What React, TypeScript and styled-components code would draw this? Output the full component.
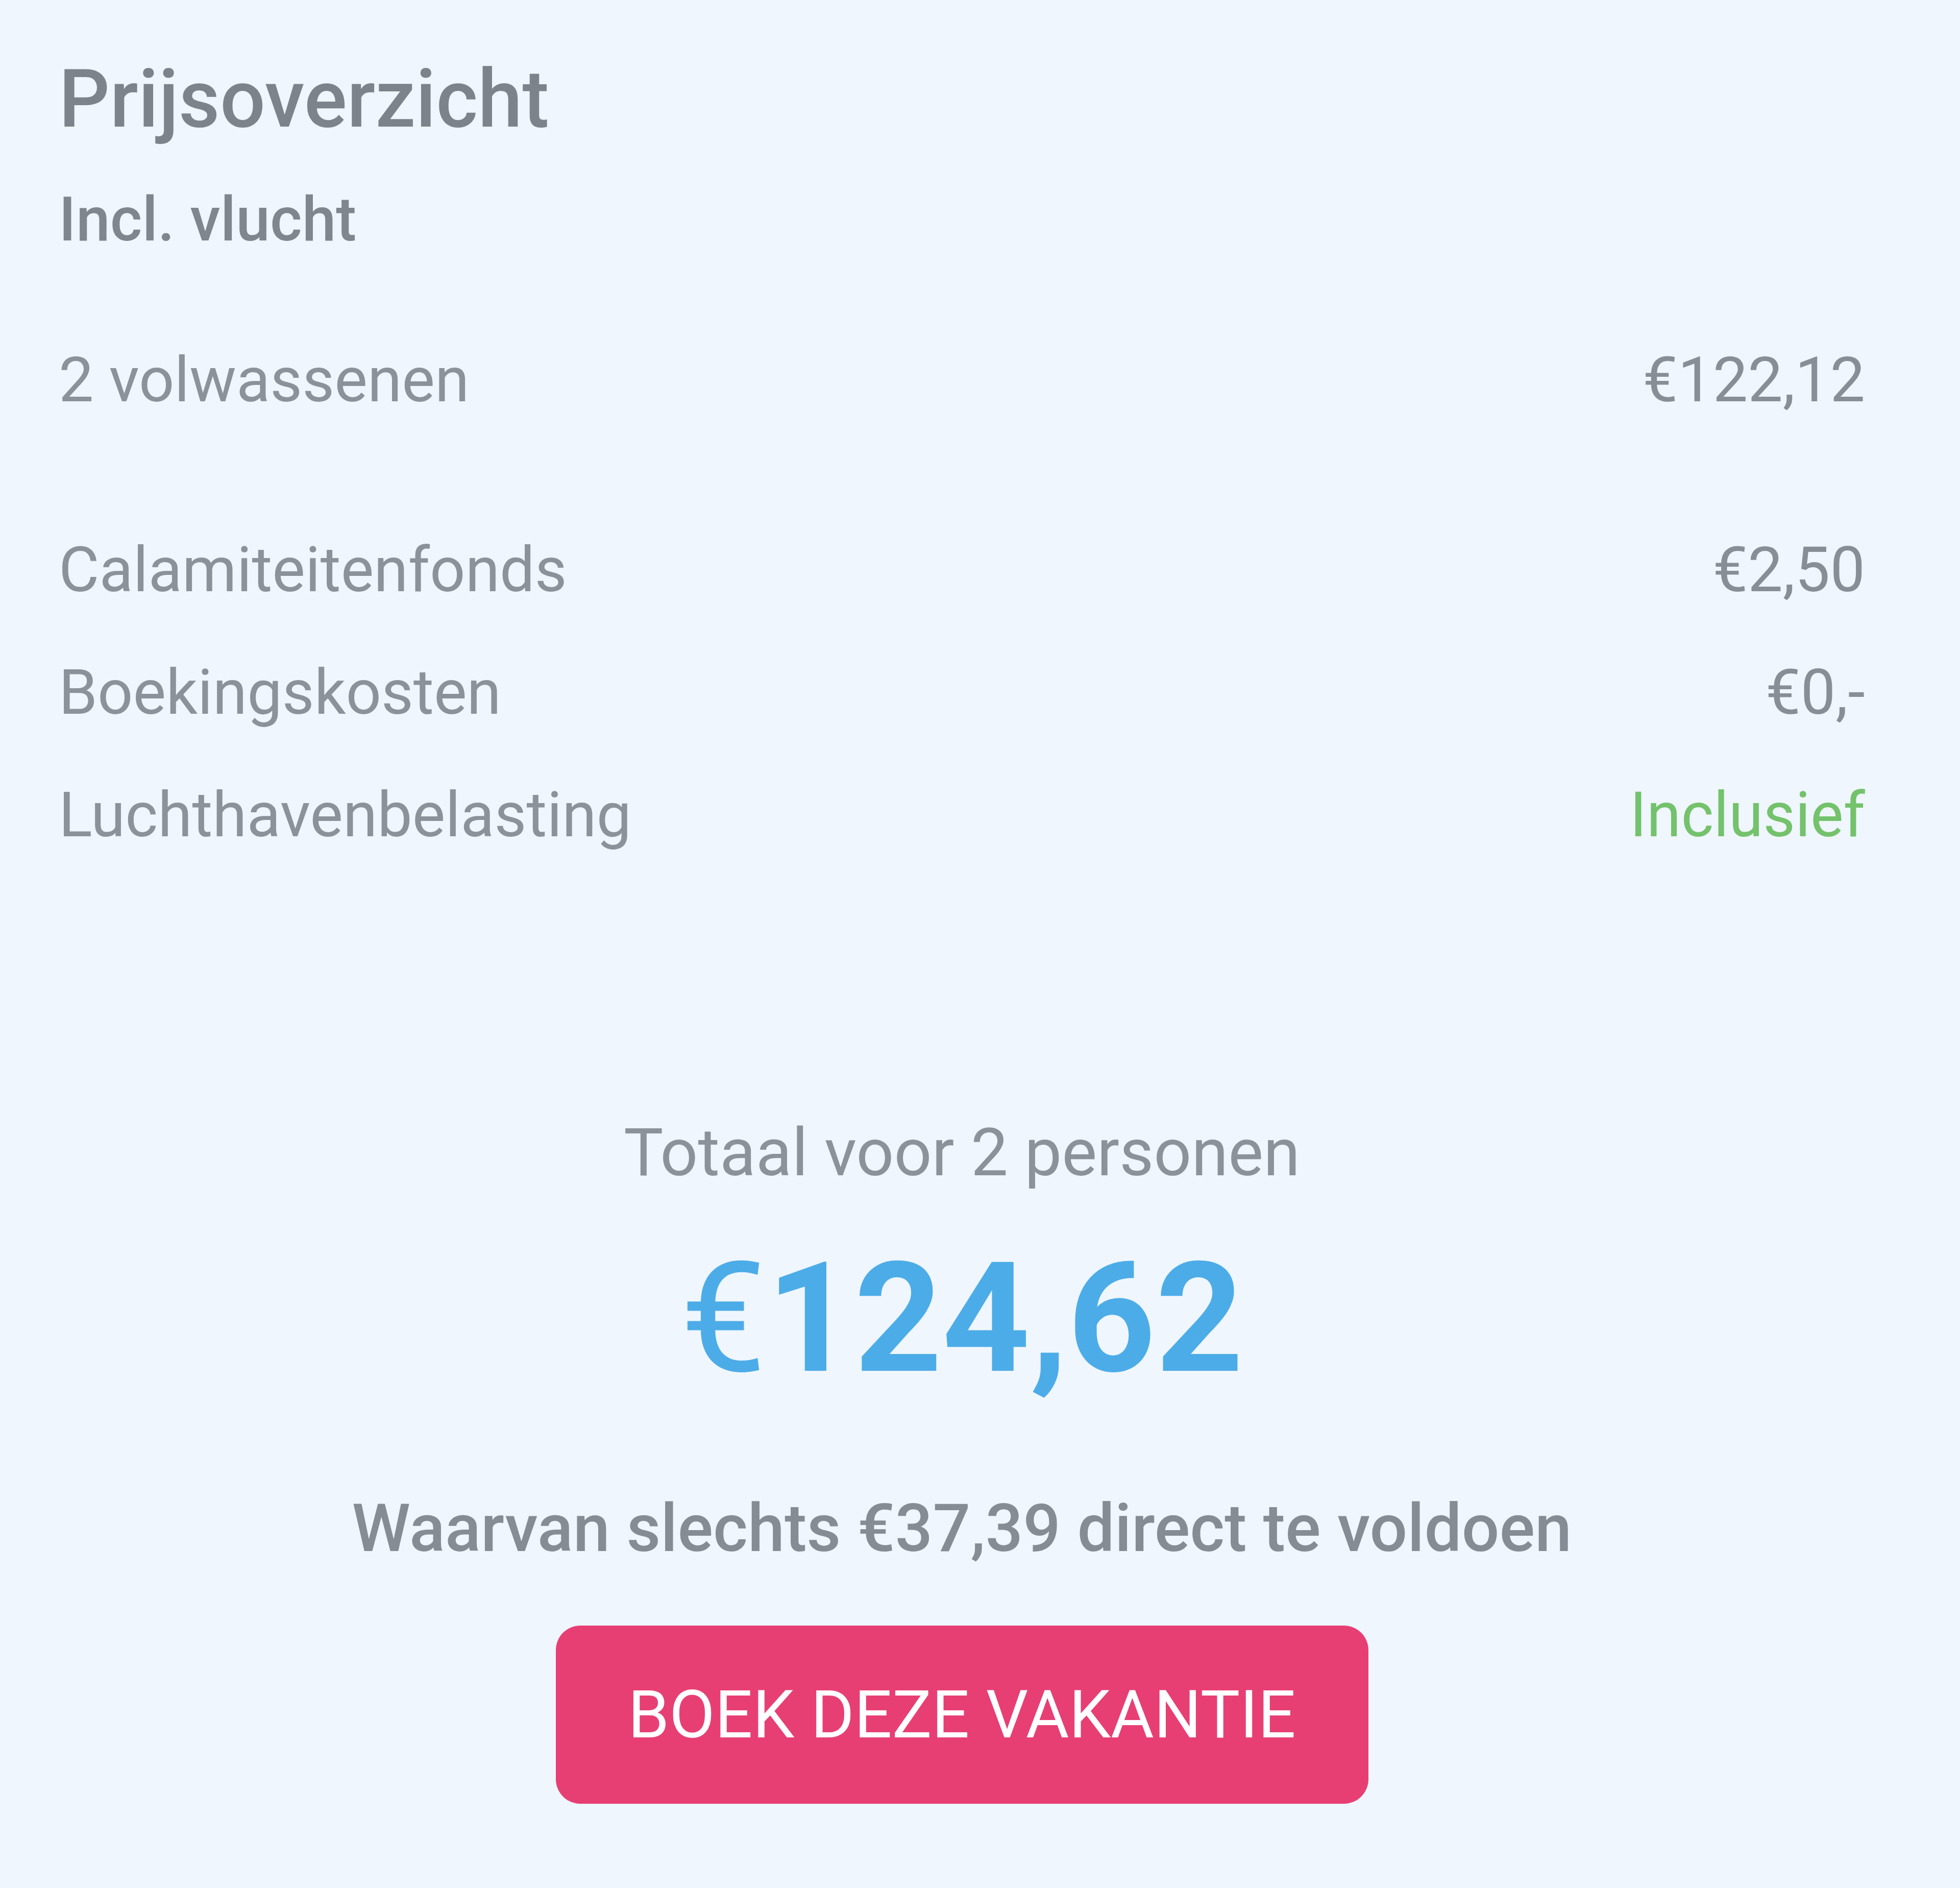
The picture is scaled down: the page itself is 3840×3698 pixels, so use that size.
import styled, { createGlobalStyle } from 'styled-components';

const GlobalStyle = createGlobalStyle`
  html, body {
    margin: 0;
    padding: 0;
    background-color: #eff6fd;
  }

  body {
    font-family: Roboto, "Liberation Sans", sans-serif;
  }
`;

const Panel = styled.section`
  box-sizing: border-box;
  width: 3840px;
  min-height: 3698px;
  padding: 100px 186px 164px 115px;
  background-color: #eff6fd;
  display: flex;
  flex-direction: column;
`;

const Title = styled.h1`
  margin: 0;
  font-size: 157px;
  line-height: 1.2;
  font-weight: 500;
  color: #7d838b;
`;

const Subtitle = styled.h2`
  margin: 70px 0 0;
  font-size: 120px;
  line-height: 1.2;
  font-weight: 500;
  color: #80868e;
`;

const PriceList = styled.ul`
  list-style: none;
  margin: 170px 0 0;
  padding: 0;
  display: flex;
  flex-direction: column;
  gap: 94px;
`;

const PriceRow = styled.li<{ $spaceAfter?: boolean }>`
  display: flex;
  justify-content: space-between;
  align-items: baseline;
  font-size: 122px;
  line-height: 146px;
  margin-bottom: ${(p) => (p.$spaceAfter ? '132px' : '0')};
`;

const Label = styled.span`
  color: #8c929a;
`;

const Amount = styled.span<{ $included?: boolean }>`
  color: ${(p) => (p.$included ? '#74c26c' : '#888e96')};
`;

const TotalBlock = styled.div`
  margin-top: 510px;
  display: flex;
  flex-direction: column;
  align-items: center;
  text-align: center;
`;

const TotalCaption = styled.p`
  margin: 0;
  font-size: 130px;
  line-height: 1.2;
  color: #8c929a;
`;

const TotalAmount = styled.p`
  margin: 67px 0 0;
  font-size: 300px;
  line-height: 1.2;
  font-weight: 700;
  color: #4cace8;
`;

const Currency = styled.span`
  font-weight: 400;
`;

const DepositNote = styled.p`
  margin: 153px 0 0;
  font-size: 130px;
  line-height: 1.2;
  font-weight: 500;
  color: #868c94;
`;

const BookButton = styled.button`
  margin-top: 112px;
  width: 1592px;
  height: 349px;
  border: none;
  border-radius: 48px;
  background-color: #e73f74;
  color: #ffffff;
  font-family: Roboto, "Liberation Sans", sans-serif;
  font-size: 130px;
  line-height: 1.2;
  text-transform: uppercase;
  display: flex;
  align-items: center;
  justify-content: center;
  cursor: pointer;
`;

const rows = [
  { label: '2 volwassenen', amount: '€122,12', spaceAfter: true },
  { label: 'Calamiteitenfonds', amount: '€2,50' },
  { label: 'Boekingskosten', amount: '€0,-' },
  { label: 'Luchthavenbelasting', amount: 'Inclusief', included: true },
];

const App = () => {
  return (
    <>
      <GlobalStyle />
      <Panel>
        <Title>Prijsoverzicht</Title>
        <Subtitle>Incl. vlucht</Subtitle>
        <PriceList>
          {rows.map((row) => (
            <PriceRow key={row.label} $spaceAfter={row.spaceAfter}>
              <Label>{row.label}</Label>
              <Amount $included={row.included}>{row.amount}</Amount>
            </PriceRow>
          ))}
        </PriceList>
        <TotalBlock>
          <TotalCaption>Totaal voor 2 personen</TotalCaption>
          <TotalAmount>
            <Currency>€</Currency>124,62
          </TotalAmount>
          <DepositNote>Waarvan slechts €37,39 direct te voldoen</DepositNote>
          <BookButton>Boek deze vakantie</BookButton>
        </TotalBlock>
      </Panel>
    </>
  );
};

export default App;
